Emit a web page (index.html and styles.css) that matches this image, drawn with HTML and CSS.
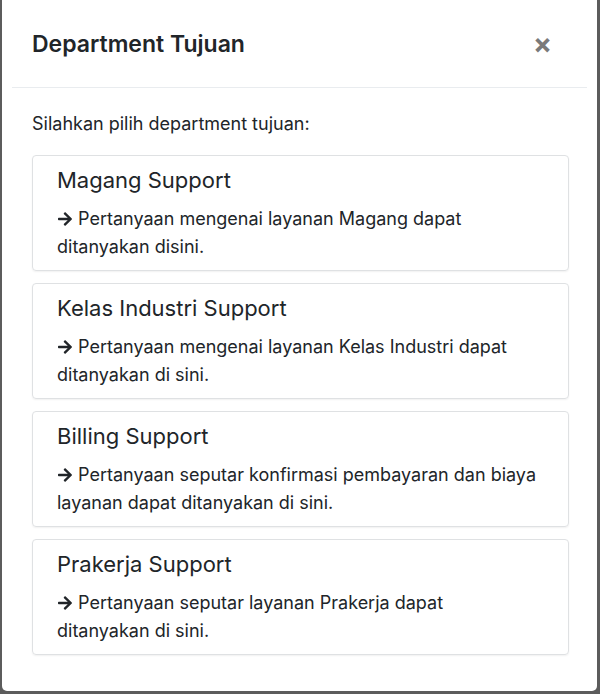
FILE: index.html
```html
<!DOCTYPE html>
<html>
<head>
<meta charset="utf-8">
<link rel="stylesheet" href="styles.css">
</head>
<body>
<div class="modal">
  <div class="modal-header">
    <h5 class="modal-title">Department Tujuan</h5>
    <button class="close" type="button">&times;</button>
  </div>
  <div class="modal-body">
    <p class="intro">Silahkan pilih department tujuan:</p>
    <div class="list">
      <div class="card">
        <h5 class="card-title">Magang Support</h5>
        <p class="card-text"><svg class="arrow" viewBox="0 0 448 512"><path d="M190.5 66.9l22.2-22.2c9.4-9.4 24.6-9.4 33.9 0L441 239c9.4 9.4 9.4 24.6 0 33.9L246.6 467.3c-9.4 9.4-24.6 9.4-33.9 0l-22.2-22.2c-9.5-9.5-9.3-25 .4-34.3L311.4 296H24c-13.3 0-24-10.7-24-24v-32c0-13.3 10.7-24 24-24h287.4L190.9 101.2c-9.8-9.3-10-24.8-.4-34.3z"/></svg> Pertanyaan mengenai layanan Magang dapat ditanyakan disini.</p>
      </div>
      <div class="card">
        <h5 class="card-title">Kelas Industri Support</h5>
        <p class="card-text"><svg class="arrow" viewBox="0 0 448 512"><path d="M190.5 66.9l22.2-22.2c9.4-9.4 24.6-9.4 33.9 0L441 239c9.4 9.4 9.4 24.6 0 33.9L246.6 467.3c-9.4 9.4-24.6 9.4-33.9 0l-22.2-22.2c-9.5-9.5-9.3-25 .4-34.3L311.4 296H24c-13.3 0-24-10.7-24-24v-32c0-13.3 10.7-24 24-24h287.4L190.9 101.2c-9.8-9.3-10-24.8-.4-34.3z"/></svg> Pertanyaan mengenai layanan Kelas Industri dapat ditanyakan di sini.</p>
      </div>
      <div class="card">
        <h5 class="card-title">Billing Support</h5>
        <p class="card-text"><svg class="arrow" viewBox="0 0 448 512"><path d="M190.5 66.9l22.2-22.2c9.4-9.4 24.6-9.4 33.9 0L441 239c9.4 9.4 9.4 24.6 0 33.9L246.6 467.3c-9.4 9.4-24.6 9.4-33.9 0l-22.2-22.2c-9.5-9.5-9.3-25 .4-34.3L311.4 296H24c-13.3 0-24-10.7-24-24v-32c0-13.3 10.7-24 24-24h287.4L190.9 101.2c-9.8-9.3-10-24.8-.4-34.3z"/></svg> Pertanyaan seputar konfirmasi pembayaran dan biaya layanan dapat ditanyakan di sini.</p>
      </div>
      <div class="card">
        <h5 class="card-title">Prakerja Support</h5>
        <p class="card-text"><svg class="arrow" viewBox="0 0 448 512"><path d="M190.5 66.9l22.2-22.2c9.4-9.4 24.6-9.4 33.9 0L441 239c9.4 9.4 9.4 24.6 0 33.9L246.6 467.3c-9.4 9.4-24.6 9.4-33.9 0l-22.2-22.2c-9.5-9.5-9.3-25 .4-34.3L311.4 296H24c-13.3 0-24-10.7-24-24v-32c0-13.3 10.7-24 24-24h287.4L190.9 101.2c-9.8-9.3-10-24.8-.4-34.3z"/></svg> Pertanyaan seputar layanan Prakerja dapat ditanyakan di sini.</p>
      </div>
    </div>
  </div>
</div>
</body>
</html>
```
FILE: styles.css
```css
html, body {
  margin: 0;
  padding: 0;
  height: 694px;
  overflow: hidden;
}
body {
  background: #5c5c5c;
  font-family: "Inter", "Noto Sans", sans-serif;
  color: #212529;
}
.modal {
  box-sizing: border-box;
  height: 691px;
  margin: 0 3px 0 2px;
  background: #fff;
  border-radius: 0 0 5px 5px;
}
.modal-header {
  display: flex;
  align-items: center;
  justify-content: space-between;
  margin: 0 10px;
  padding: 0 20px;
  height: 87px;
  border-bottom: 1px solid #e9ecef;
}
.modal-title {
  margin: 0;
  font-size: 23px;
  font-weight: 600;
  line-height: 28px;
}
.close {
  background: none;
  border: 0;
  padding: 0;
  margin-right: 15px;
  font-family: "Inter", sans-serif;
  font-size: 28px;
  font-weight: 700;
  line-height: 1;
  color: #7a7a7a;
}
.modal-body {
  padding: 24px 28px 0 30px;
}
.intro {
  margin: 0 0 19px;
  font-size: 18px;
  line-height: 24px;
}
.list {
  display: flex;
  flex-direction: column;
  gap: 12px;
}
.card {
  border: 1px solid #dfe1e3;
  border-radius: 4px;
  padding: 11px 30px 9px 24px;
  box-shadow: 0 1px 2px rgba(0,0,0,0.06);
}
.card-title {
  margin: 0 0 11px;
  font-size: 22px;
  font-weight: 400;
  line-height: 27px;
}
.card-text {
  margin: 0;
  font-size: 18px;
  line-height: 28px;
}
.arrow {
  width: 16px;
  height: 16px;
  fill: #212529;
  vertical-align: -2px;
}
```
